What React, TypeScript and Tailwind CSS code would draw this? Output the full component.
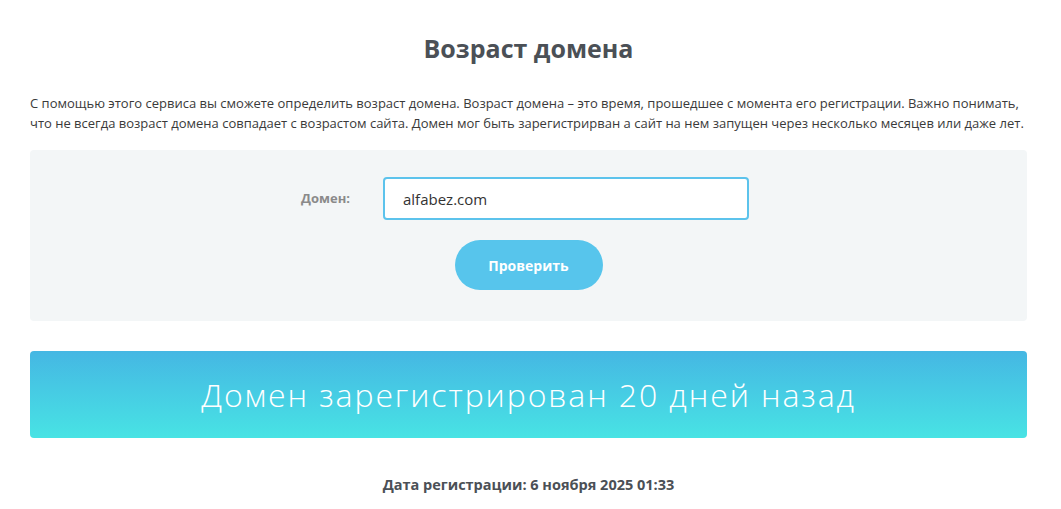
import { useState } from 'react';

export default function App() {
  const [domain, setDomain] = useState('alfabez.com');

  return (
    <div className="bg-white min-h-[509px] pl-[30px] pr-[34px] text-[#333]" style={{ fontFamily: '"Open Sans", "Noto Sans", sans-serif' }}>
      <h1 className="pt-[31px] text-center text-[25px] leading-[34px] font-bold text-[#4b5056]">
        Возраст домена
      </h1>

      <p className="mt-[28px] text-[13px] leading-[20px] text-[#3a3a3a]">
        С помощью этого сервиса вы сможете определить возраст домена. Возраст домена – это время, прошедшее с момента его регистрации. Важно понимать, что не всегда возраст домена совпадает с возрастом сайта. Домен мог быть зарегистрирван а сайт на нем запущен через несколько месяцев или даже лет.
      </p>

      {/* форма */}
      <section className="mt-[17px] bg-[#f3f6f7] rounded-[4px] h-[171px] flex flex-col items-center pt-[27px]">
        <div className="flex items-center pr-[7px]">
          <label className="w-[82px] text-[13px] font-bold text-[#8a8a8a]">Домен:</label>
          <input
            type="text"
            value={domain}
            onChange={e => setDomain(e.target.value)}
            className="w-[366px] h-[43px] border-2 border-[#5cc3ec] rounded-[4px] bg-white px-[18px] text-[15px] text-[#333] outline-none"
          />
        </div>
        <button className="mt-[20px] w-[148px] h-[50px] rounded-full bg-[#57c5ec] text-white text-[14px] font-bold">
          Проверить
        </button>
      </section>

      {/* результат */}
      <div className="mt-[30px] h-[87px] rounded-[4px] bg-gradient-to-b from-[#45b7e3] to-[#48e3e4] flex items-center justify-center">
        <span className="text-white text-[32px] font-light tracking-[1.9px]">Домен зарегистрирован 20 дней назад</span>
      </div>

      <p className="mt-[36px] text-center text-[14.5px] font-bold text-[#4b5056]">
        Дата регистрации: 6 ноября 2025 01:33
      </p>
    </div>
  );
}
